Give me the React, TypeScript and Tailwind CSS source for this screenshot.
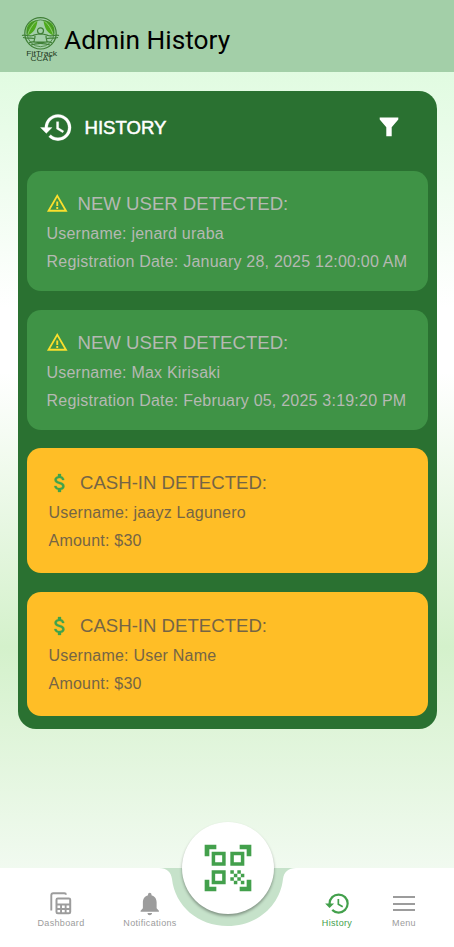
import React from "react";
import {
  MdAttachMoney,
  MdHistory,
  MdNotifications,
  MdQrCodeScanner,
  MdWarningAmber,
} from "react-icons/md";

function Logo() {
  return (
    <svg width="40" height="50" viewBox="0 0 40 50" className="shrink-0">
      <path d="M16.500 4C7 5 4 12 6 19.500 12 18 16 12 16.500 4zM22.500 4C32 5 35 12 33 19.500 27 18 23 12 22.500 4z" fill="#4eaa1c" />
      <path d="M6.500 19C9 12 12 8 16 4.500M32.500 19C30 12 27 8 23 4.500" stroke="#a5d49b" strokeWidth="0.8" fill="none" />
      <g fill="none" stroke="#3f7f35" strokeWidth="1.200">
        <circle cx="19.500" cy="17.300" r="15.700" />
        <circle cx="19.500" cy="17.300" r="13.400" strokeWidth="0.8" />
        <circle cx="19.500" cy="14.800" r="3" />
        <path d="M1 19.500c3-1.500 7 1.500 11 0 3-1 4-1.500 7.500-1.500s4.500.5 7.500 1.500c4 1.500 8-1.500 11 0M2 21.500c5 1.500 8 0 11 1M37 21.500c-5 1.500-8 0-11 1" />
        <path d="M14 20c0 3-1 4-1 6h13c0-2-1-3-1-6M8 27c4-3 7 0 11.500 0S27 24 31 27M10 29c6-2 13-2 19 0" />
      </g>
      <g fill="#1f3a20" fontFamily="'Liberation Sans', Arial, sans-serif" fontSize="7">
        <text x="5.200" y="39.500" textLength="31" lengthAdjust="spacingAndGlyphs">FitTrack</text>
        <text x="9.500" y="45" textLength="22" lengthAdjust="spacingAndGlyphs">CCAT</text>
      </g>
    </svg>
  );
}

function FilterIcon() {
  return (
    <svg width="20" height="20" viewBox="0 0 20 20" fill="white">
      <path d="M.7.5h18.600v1.900L12.700 10.300v8.900H7.300v-8.900L.7 2.400z" />
    </svg>
  );
}

function DashboardIcon() {
  return (
    <svg width="22" height="23" viewBox="0 0 22 23" fill="none">
      <path d="M2.200 17.500h-.9V3.200Q1.300 1.300 3.200 1.300h11.300q1.400 0 1.400 1.500" stroke="#9c9c9c" strokeWidth="1.900" />
      <rect x="5.500" y="5.400" width="15.700" height="16.900" rx="2.300" fill="#9c9c9c" />
      <path d="M7.500 7.500h11.700v4.100H7.500zM7.500 13.500h2.600v2.400H7.500zM12 13.500h2.700v2.400H12zM16.600 13.500h2.600v2.400h-2.600zM7.500 17.900h2.600v2.300H7.500zM12 17.900h2.700v2.300H12zM16.600 17.900h2.600v2.300h-2.600z" fill="white" />
    </svg>
  );
}

function NewUserCard({ lines }: { lines: string[] }) {
  return (
    <article className="h-[120px] rounded-[14px] bg-[#3f9346] pl-[19.500px] pt-[19.500px] text-[#b5b9b3]">
      <div className="flex h-[26px] items-center">
        <MdWarningAmber size={22.500} color="#fbdf2d" className="-ml-px shrink-0" />
        <h2 className="ml-[9.500px] whitespace-nowrap text-[18.600px]">NEW USER DETECTED:</h2>
      </div>
      {lines.map((line) => (
        <p key={line} className="mt-[3px] h-[25px] whitespace-nowrap text-[16px] leading-[28px] tracking-[0.220px]">{line}</p>
      ))}
    </article>
  );
}

function CashInCard({ user }: { user: string }) {
  return (
    <article className="h-[124.500px] rounded-[14px] bg-[#ffbe26] pl-[21.500px] pt-[21.500px] text-[#756545]">
      <div className="flex h-[26px] items-center">
        <MdAttachMoney size={24} color="#3fa34c" className="-ml-px shrink-0 stroke-[0.3] [&>path:first-child]:stroke-none" />
        <h2 className="ml-[8.500px] whitespace-nowrap text-[18.600px]">CASH-IN DETECTED:</h2>
      </div>
      <p className="mt-[3px] h-[25px] whitespace-nowrap text-[16px] leading-[28px] tracking-[0.220px]">Username: {user}</p>
      <p className="mt-[3px] h-[25px] whitespace-nowrap text-[16px] leading-[28px] tracking-[0.220px]">Amount: $30</p>
    </article>
  );
}

function NavItem({ label, active, children }: { label: string; active?: boolean; children: React.ReactNode }) {
  return (
    <button className={`flex h-full flex-col items-center ${active ? "text-[#43a04c]" : "text-[#9c9c9c]"}`}>
      <span className="flex h-[27px] items-center">{children}</span>
      <span className="whitespace-nowrap text-[9px] leading-[12px] tracking-[0.330px]">{label}</span>
    </button>
  );
}

export default function App() {
  return (
    <div className="flex h-[947px] w-[454px] flex-col overflow-hidden bg-white font-['Liberation_Sans',Arial,sans-serif]">
      <header className="flex h-[71.500px] shrink-0 items-start bg-[#a3cfa8] pl-[21px] pt-[16px]">
        <Logo />
        <h1 className="ml-[3px] mt-[4px] whitespace-nowrap font-['Roboto',sans-serif] text-[26.300px] leading-[40px] text-black">Admin History</h1>
      </header>

      <main className="flex-1 bg-[linear-gradient(to_bottom,#e1fbe1_0px,#ffffff_235px,#ffffff_300px,#d4f1cb_575px,#f1faf0_797px)] pl-[18px] pr-[17px] pt-[19px]">
        <section className="h-[638.500px] rounded-[18px] bg-[#2a7131] px-[9px]">
          <div className="flex h-[80.500px] items-center pb-[7px] pl-[11.500px] pr-[29px]">
            <MdHistory size={35} color="white" className="stroke-[0.2] [&>path:first-child]:stroke-none" />
            <h2 className="ml-[11px] mt-px text-[18.600px] text-white [-webkit-text-stroke:0.500px_white]">HISTORY</h2>
            <div className="ml-auto"><FilterIcon /></div>
          </div>
          <div className="flex flex-col">
            <NewUserCard lines={["Username: jenard uraba", "Registration Date: January 28, 2025 12:00:00 AM"]} />
            <div className="mt-[19px]">
              <NewUserCard lines={["Username: Max Kirisaki", "Registration Date: February 05, 2025 3:19:20 PM"]} />
            </div>
            <div className="mt-[18px]"><CashInCard user="jaayz Lagunero" /></div>
            <div className="mt-[19px]"><CashInCard user="User Name" /></div>
          </div>
        </section>
      </main>

      <nav className="relative h-[79px] shrink-0 bg-white">
        <svg className="absolute left-[159px] top-0" width="137" height="59" viewBox="0 0 137 59">
          <path d="M0 0C8 0 12 4 13 11C16 38 39 58 68.500 58S121 38 124 11C125 4 129 0 137 0z" fill="#c6e2ca" />
        </svg>
        <button className="absolute left-[182px] top-[-46px] flex size-[92px] items-center justify-center rounded-full bg-white shadow-[0_2px_3px_rgba(0,0,0,0.35)]">
          <MdQrCodeScanner size={56} color="#43a04c" />
        </button>
        <div className="flex h-full pl-[31px] pr-[20px] pt-[22px]">
          <div className="flex w-[60px] justify-center"><NavItem label="Dashboard"><DashboardIcon /></NavItem></div>
          <div className="ml-[28px] flex w-[62px] justify-center"><NavItem label="Notifications"><MdNotifications size={27.500} /></NavItem></div>
          <div className="ml-auto flex w-[60px] justify-center"><NavItem label="History" active><MdHistory size={27} /></NavItem></div>
          <div className="ml-[7px] flex w-[60px] justify-center">
            <NavItem label="Menu">
              <svg width="22" height="16" viewBox="0 0 22 16" stroke="currentColor" strokeWidth="2">
                <path d="M0 1h22M0 8h22M0 14h22" />
              </svg>
            </NavItem>
          </div>
        </div>
      </nav>
    </div>
  );
}
